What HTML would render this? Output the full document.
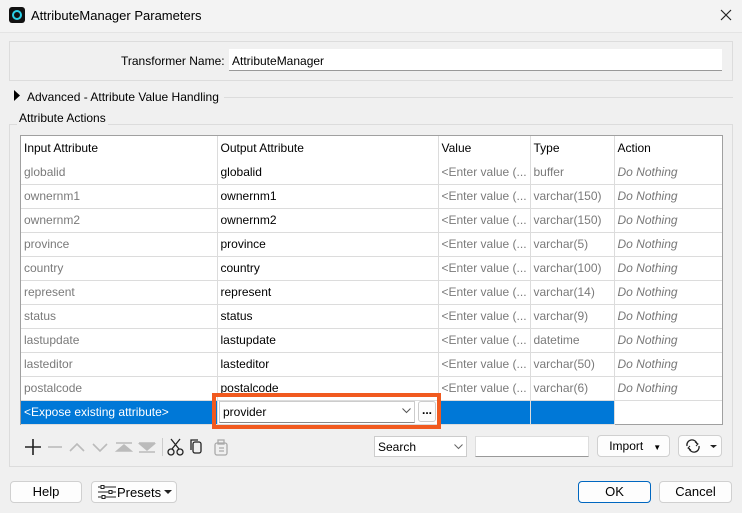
<!DOCTYPE html>
<html><head><style>
*{box-sizing:border-box;margin:0;padding:0}
body{width:742px;height:513px;background:#f0f0f0;font-family:"Liberation Sans",sans-serif;font-size:12px;color:#000;position:relative;overflow:hidden}
.a{position:absolute}
.t{position:absolute;white-space:nowrap}
.btn{position:absolute;background:#fdfdfd;border:1px solid #d0d0d0;border-radius:4px;text-align:center;line-height:20px}
table{border-collapse:collapse;table-layout:fixed}
td{height:24px;padding:0 3px;white-space:nowrap;overflow:hidden;border-right:1px solid #dcdcdc;border-bottom:1px solid #dcdcdc;font-size:12px}
tr.h td{border-bottom:none}
td.g{color:#7a7a7a}
td.i{color:#777;font-style:italic}
</style></head><body>
<div class="a" style="left:0;top:0;width:742px;height:33px;background:#f3f3f3;border-bottom:1px solid #e4e4e4"></div>
<div class="a" style="left:9px;top:7px;width:16px;height:16px;background:#111;border-radius:3px"></div>
<div class="a" style="left:12px;top:10px;width:10px;height:10px;border:2px solid #2bd0e8;border-radius:50%"></div>
<div class="t" style="left:31px;top:8px;font-size:13px">AttributeManager Parameters</div>
<svg class="a" style="left:720px;top:9px" width="12" height="12"><path d="M1 1L11 11M11 1L1 11" stroke="#222" stroke-width="1.2"/></svg>

<div class="a" style="left:9px;top:41px;width:724px;height:40px;border:1px solid #dcdcdc"></div>
<div class="t" style="left:121px;top:54px">Transformer Name:</div>
<div class="a" style="left:229px;top:49px;width:493px;height:22px;background:#fff;border-bottom:1px solid #999"></div>
<div class="t" style="left:232px;top:54px">AttributeManager</div>

<svg class="a" style="left:13px;top:90px" width="8" height="11"><path d="M1 0L7 5.5L1 11Z" fill="#000"/></svg>
<div class="t" style="left:27px;top:90px">Advanced - Attribute Value Handling</div>
<div class="a" style="left:224px;top:97px;width:509px;height:1px;background:#dcdcdc"></div>

<div class="a" style="left:9px;top:124px;width:724px;height:343px;border:1px solid #dcdcdc"></div>
<div class="t" style="left:17px;top:111px;background:#f0f0f0;padding:0 2px">Attribute Actions</div>

<div class="a" style="left:20px;top:135px;width:703px;height:290px;background:#fff;border:1px solid #a0a0a0"></div>
<table class="a" style="left:21px;top:136px;width:701px">
<colgroup><col style="width:196px"><col style="width:221px"><col style="width:92px"><col style="width:84px"><col style="width:108px"></colgroup>
<tr class="h"><td>Input Attribute</td><td>Output Attribute</td><td>Value</td><td>Type</td><td style="border-right:none">Action</td></tr>
<tr><td class="g">globalid</td><td>globalid</td><td class="g">&lt;Enter value (...</td><td class="g">buffer</td><td class="i" style="border-right:none">Do Nothing</td></tr>
<tr><td class="g">ownernm1</td><td>ownernm1</td><td class="g">&lt;Enter value (...</td><td class="g">varchar(150)</td><td class="i" style="border-right:none">Do Nothing</td></tr>
<tr><td class="g">ownernm2</td><td>ownernm2</td><td class="g">&lt;Enter value (...</td><td class="g">varchar(150)</td><td class="i" style="border-right:none">Do Nothing</td></tr>
<tr><td class="g">province</td><td>province</td><td class="g">&lt;Enter value (...</td><td class="g">varchar(5)</td><td class="i" style="border-right:none">Do Nothing</td></tr>
<tr><td class="g">country</td><td>country</td><td class="g">&lt;Enter value (...</td><td class="g">varchar(100)</td><td class="i" style="border-right:none">Do Nothing</td></tr>
<tr><td class="g">represent</td><td>represent</td><td class="g">&lt;Enter value (...</td><td class="g">varchar(14)</td><td class="i" style="border-right:none">Do Nothing</td></tr>
<tr><td class="g">status</td><td>status</td><td class="g">&lt;Enter value (...</td><td class="g">varchar(9)</td><td class="i" style="border-right:none">Do Nothing</td></tr>
<tr><td class="g">lastupdate</td><td>lastupdate</td><td class="g">&lt;Enter value (...</td><td class="g">datetime</td><td class="i" style="border-right:none">Do Nothing</td></tr>
<tr><td class="g">lasteditor</td><td>lasteditor</td><td class="g">&lt;Enter value (...</td><td class="g">varchar(50)</td><td class="i" style="border-right:none">Do Nothing</td></tr>
<tr><td class="g">postalcode</td><td>postalcode</td><td class="g">&lt;Enter value (...</td><td class="g">varchar(6)</td><td class="i" style="border-right:none">Do Nothing</td></tr>
<tr><td style="background:#0078d7;color:#fff">&lt;Expose existing attribute&gt;</td><td style="background:#fff"></td><td style="background:#0078d7"></td><td style="background:#0078d7"></td><td style="border-right:none;border-bottom:none"></td></tr>
</table>
<div class="a" style="left:219px;top:401px;width:196px;height:22px;background:#fff;border:1px solid #ccc;border-bottom-color:#888"></div>
<div class="t" style="left:223px;top:405px">provider</div>
<svg class="a" style="left:402px;top:408px" width="9" height="6"><path d="M0.5 0.5L4.5 4.5L8.5 0.5" stroke="#555" fill="none"/></svg>
<div class="a" style="left:418px;top:401px;width:18px;height:21px;background:#fdfdfd;border:1px solid #ccc;border-radius:3px;text-align:center;font-weight:bold;line-height:16px">...</div>
<div class="a" style="left:212px;top:393px;width:229px;height:36px;border:4px solid #f15a1f"></div>

<svg class="a" style="left:22px;top:437px" width="140" height="20" stroke-width="1.6" fill="none">
<path d="M11 2V18M3 10H19" stroke="#222"/>
<path d="M26 10H40" stroke="#bbb"/>
<path d="M48 14L55 7L62 14" stroke="#bbb"/>
<path d="M71 7L78 14L85 7" stroke="#bbb"/>
<path d="M94 6H110M95 14L102 8L109 14Z" stroke="#bbb" fill="#bbb"/>
<path d="M117 6H133M118 7L125 13L132 7Z M117 15H133" stroke="#bbb" fill="#bbb"/>
</svg>
<div class="a" style="left:162px;top:438px;width:1px;height:18px;background:#ccc"></div>
<svg class="a" style="left:167px;top:437px" width="70" height="20" fill="none" stroke-width="1.3">
<circle cx="4" cy="15" r="3" stroke="#222"/><circle cx="13" cy="15" r="3" stroke="#222"/><path d="M5 12L13 2M12 12L4 2" stroke="#222"/>
<rect x="26" y="5" width="8" height="11" rx="2" stroke="#222"/><path d="M24 13V3H31" stroke="#222"/>
<rect x="48" y="6" width="12" height="12" rx="2" stroke="#aaa"/><rect x="51" y="3" width="6" height="4" stroke="#aaa"/><path d="M52 11H57M52 14H57" stroke="#aaa"/>
</svg>

<div class="a" style="left:374px;top:436px;width:93px;height:21px;background:#fff;border:1px solid #ccc"></div>
<div class="t" style="left:378px;top:440px">Search</div>
<svg class="a" style="left:454px;top:444px" width="9" height="6"><path d="M0.5 0.5L4.5 4.5L8.5 0.5" stroke="#666" fill="none"/></svg>
<div class="a" style="left:475px;top:436px;width:114px;height:21px;background:#fff;border-bottom:1px solid #999;border-left:1px solid #ddd;border-right:1px solid #ddd;border-top:1px solid #ddd"></div>
<div class="btn" style="left:597px;top:435px;width:73px;height:22px">&nbsp;Import&nbsp;&nbsp;&nbsp;<span style="font-size:8px">▼</span></div>
<div class="btn" style="left:678px;top:435px;width:44px;height:22px"></div>
<svg class="a" style="left:684px;top:438px" width="34" height="16" fill="none"><path d="M3 8A5 5 0 0 1 13 6M15 8A5 5 0 0 1 5 10" stroke="#222" stroke-width="1.3"/><path d="M11 4L14 6L12 8M7 12L4 10L6 8" stroke="#222" stroke-width="1"/><path d="M26 7H33L29.5 10Z" fill="#222"/></svg>

<div class="btn" style="left:10px;top:481px;width:72px;height:22px;font-size:13px">Help</div>
<div class="btn" style="left:91px;top:481px;width:86px;height:22px"></div>
<svg class="a" style="left:98px;top:485px" width="18" height="14" stroke="#222" fill="#fff"><path d="M0 2H18M0 7H18M0 12H18"/><rect x="3" y="0.5" width="3" height="3"/><rect x="11" y="5.5" width="3" height="3"/><rect x="4" y="10.5" width="3" height="3"/></svg>
<div class="t" style="left:117px;top:485px;font-size:13px">Presets</div>
<svg class="a" style="left:164px;top:490px" width="8" height="5"><path d="M0 0H8L4 4Z" fill="#222"/></svg>
<div class="btn" style="left:578px;top:481px;width:73px;height:22px;border:1px solid #0067c0;font-size:13px">OK</div>
<div class="btn" style="left:659px;top:481px;width:73px;height:22px;font-size:13px">Cancel</div>
</body></html>
